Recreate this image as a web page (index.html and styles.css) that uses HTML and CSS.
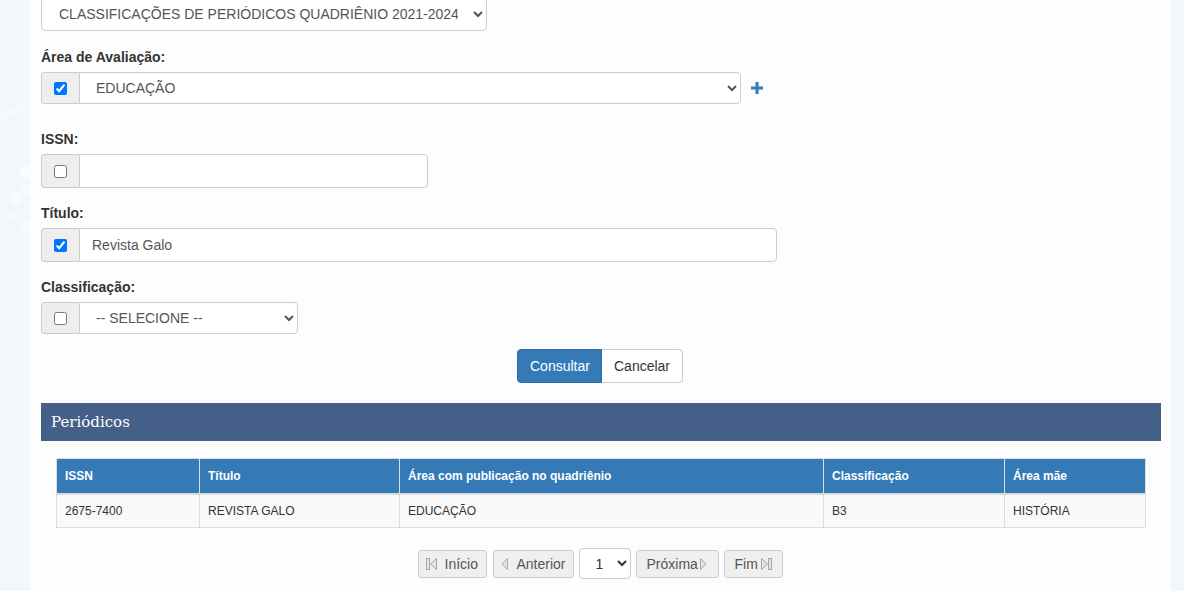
FILE: index.html
```html
<!DOCTYPE html>
<html lang="pt-BR">
<head>
  <meta charset="UTF-8">
  <title>Qualis Periódicos</title>
<link rel="stylesheet" href="styles.css">
</head>
<body>
<div class="page">
  <select class="form-control evento">
    <option>CLASSIFICAÇÕES DE PERIÓDICOS QUADRIÊNIO 2021-2024</option>
  </select>

  <div class="field field-area">
    <label class="lbl">Área de Avaliação:</label>
    <div class="row-plus">
      <div class="input-group w-area">
        <span class="addon"><input type="checkbox" checked></span>
        <select class="form-control sel">
          <option>EDUCAÇÃO</option>
        </select>
      </div>
      <svg class="plus" width="12" height="12" viewBox="0 0 12 12"><path d="M4.5 0h3v4.5H12v3H7.5V12h-3V7.5H0v-3h4.5z" fill="#337ab7"/></svg>
    </div>
  </div>

  <div class="field field-issn">
    <label class="lbl">ISSN:</label>
    <div class="input-group w-issn">
      <span class="addon"><input type="checkbox"></span>
      <input class="form-control txt" type="text" value="">
    </div>
  </div>

  <div class="field">
    <label class="lbl">Título:</label>
    <div class="input-group w-titulo">
      <span class="addon"><input type="checkbox" checked></span>
      <input class="form-control txt" type="text" value="Revista Galo">
    </div>
  </div>

  <div class="field">
    <label class="lbl">Classificação:</label>
    <div class="input-group w-class">
      <span class="addon"><input type="checkbox"></span>
      <select class="form-control sel">
        <option>-- SELECIONE --</option>
      </select>
    </div>
  </div>

  <div class="actions">
    <button class="btn btn-primary">Consultar</button><button class="btn btn-default">Cancelar</button>
  </div>

  <div class="panel">
    <div class="panel-heading">Periódicos</div>
    <div class="panel-body">
      <table class="tbl">
        <thead>
          <tr>
            <th class="c1">ISSN</th>
            <th class="c2">Título</th>
            <th class="c3">Área com publicação no quadriênio</th>
            <th class="c4">Classificação</th>
            <th class="c5">Área mãe</th>
          </tr>
        </thead>
        <tbody>
          <tr>
            <td>2675-7400</td>
            <td>REVISTA GALO</td>
            <td>EDUCAÇÃO</td>
            <td>B3</td>
            <td>HISTÓRIA</td>
          </tr>
        </tbody>
      </table>

      <div class="pager">
        <button class="pg pg-ini"><svg width="12" height="14" viewBox="0 0 12 14"><rect x="0.5" y="1.5" width="3" height="11" fill="#e4e4e4" stroke="#a8a8a8"/><path d="M10.5 1.5v11L4.5 7z" fill="#e4e4e4" stroke="#a8a8a8"/></svg>Início</button>
        <button class="pg pg-ant"><svg width="8" height="14" viewBox="0 0 8 14"><path d="M6.5 1.5v11L1 7z" fill="#e4e4e4" stroke="#a8a8a8"/></svg>Anterior</button>
        <select class="pg-sel"><option>1</option></select>
        <button class="pg pg-prox">Próxima<svg width="8" height="14" viewBox="0 0 8 14"><path d="M1.5 1.5v11L7 7z" fill="#e4e4e4" stroke="#a8a8a8"/></svg></button>
        <button class="pg pg-fim">Fim<svg width="12" height="14" viewBox="0 0 12 14"><path d="M1.5 1.5v11L7.5 7z" fill="#e4e4e4" stroke="#a8a8a8"/><rect x="8.5" y="1.5" width="3" height="11" fill="#e4e4e4" stroke="#a8a8a8"/></svg></button>
      </div>
    </div>
  </div>
</div>
</body>
</html>
```

FILE: styles.css
```css
* {
  box-sizing: border-box;
}
html, body {
  height: 100%;
}
body {
  margin: 0;
  overflow: hidden;
  font-family: "Liberation Sans", Arial, sans-serif;
  font-size: 14px;
  color: #333;
  background-color: #f2f7fb;
  background-image:
    radial-gradient(circle at 27px 172px, rgba(255,255,255,.6) 0 7px, transparent 8px),
    radial-gradient(circle at 16px 198px, rgba(255,255,255,.5) 0 6px, transparent 7px),
    radial-gradient(circle at 26px 190px, rgba(255,255,255,.45) 0 5px, transparent 6px),
    radial-gradient(circle at 11px 216px, rgba(255,255,255,.45) 0 3px, transparent 4px),
    radial-gradient(circle at 26px 226px, rgba(255,255,255,.45) 0 5px, transparent 6px),
    linear-gradient(150deg, transparent 0 9%, rgba(255,255,255,.35) 9% 9.6%, transparent 9.6%);
}
.page {
  margin-left: 30px;
  width: 1141px;
  height: 100%;
  padding: 1px 10px 0 11px;
  background: #fdfdfd;
}
.form-control {
  display: block;
  height: 34px;
  padding: 6px 12px;
  font-family: inherit;
  font-size: 14px;
  color: #555;
  background: #fff;
  border: 1px solid #ccc;
  border-radius: 4px;
  outline: none;
}
.evento {
  width: 446px;
  margin-top: -4px;
  padding-left: 13px;
}
.field {
  margin-top: 15px;
}
.field-area {
  margin-top: 16px;
}
.field-issn {
  margin-top: 25px;
}
.lbl {
  display: block;
  font-weight: bold;
  line-height: 20px;
  margin-bottom: 5px;
}
.row-plus {
  display: flex;
  align-items: center;
  gap: 10px;
}
.plus {
  display: block;
}
.input-group {
  display: flex;
  height: 34px;
}
.input-group.w-area,
.input-group.w-class {
  height: 32px;
}
.w-area { width: 700px; }
.w-issn { width: 387px; }
.w-titulo { width: 736px; }
.w-class { width: 257px; }
.addon {
  flex: 0 0 38px;
  display: flex;
  align-items: center;
  justify-content: center;
  background: #eee;
  border: 1px solid #ccc;
  border-right: 0;
  border-radius: 4px 0 0 4px;
}
.addon input {
  margin: 0;
  width: 13px;
  height: 13px;
}
.input-group .form-control {
  flex: 1;
  height: 100%;
  border-radius: 0 4px 4px 0;
}
.input-group .sel {
  padding-left: 12px;
}
.input-group .txt {
  padding-left: 12px;
}
.actions {
  display: flex;
  justify-content: center;
  margin-top: 15px;
  padding-right: 2px;
}
.btn {
  height: 34px;
  padding: 6px 12px;
  font-family: inherit;
  font-size: 14px;
  line-height: 20px;
  border: 1px solid #ccc;
  cursor: pointer;
}
.btn-primary {
  color: #fff;
  background: #337ab7;
  border-color: #2e6da4;
  border-radius: 4px 0 0 4px;
  width: 85px;
}
.btn-default {
  color: #333;
  background: #fff;
  border-left: 0;
  border-radius: 0 4px 4px 0;
  width: 81px;
}
.panel {
  margin-top: 20px;
}
.panel-heading {
  height: 38px;
  padding: 0 10px;
  display: flex;
  align-items: center;
  background: #445f88;
  color: #fff;
  font-family: "DejaVu Serif", "Liberation Serif", serif;
  font-size: 15px;
}
.panel-body {
  padding: 17px 15px 0;
}
.tbl {
  width: 100%;
  border-collapse: collapse;
  font-size: 12px;
}
.tbl th,
.tbl td {
  padding: 8px;
  text-align: left;
  border: 1px solid #ddd;
  line-height: 16px;
}
.tbl th {
  background: #337ab7;
  color: #fff;
  font-weight: bold;
  border-bottom: 2px solid #ddd;
  height: 35px;
}
.tbl td {
  background: #f9f9f9;
  height: 34px;
}
.c1 { width: 143px; }
.c2 { width: 200px; }
.c3 { width: 424px; }
.c4 { width: 181px; }
.pager {
  display: flex;
  justify-content: center;
  align-items: center;
  gap: 5px;
  margin-top: 20px;
  padding-right: 2px;
}
.pg {
  display: flex;
  align-items: center;
  gap: 7px;
  height: 28px;
  padding: 0 7px;
  font-family: inherit;
  font-size: 14px;
  color: #555;
  background: #efefef;
  border: 1px solid #ccc;
  border-radius: 3px;
}
.pg svg {
  display: block;
}
.pg-ini { width: 69px; }
.pg-ant { width: 81px; margin-left: 1px; gap: 8px; }
.pg-prox { width: 83px; gap: 1px; padding-left: 10px; }
.pg-fim { width: 59px; gap: 2px; padding-left: 10px; }
.pg-sel {
  width: 52px;
  height: 31px;
  padding-left: 12px;
  font-family: inherit;
  font-size: 14px;
  color: #333;
  background: #fff;
  border: 1px solid #ccc;
  border-radius: 4px;
}
```
